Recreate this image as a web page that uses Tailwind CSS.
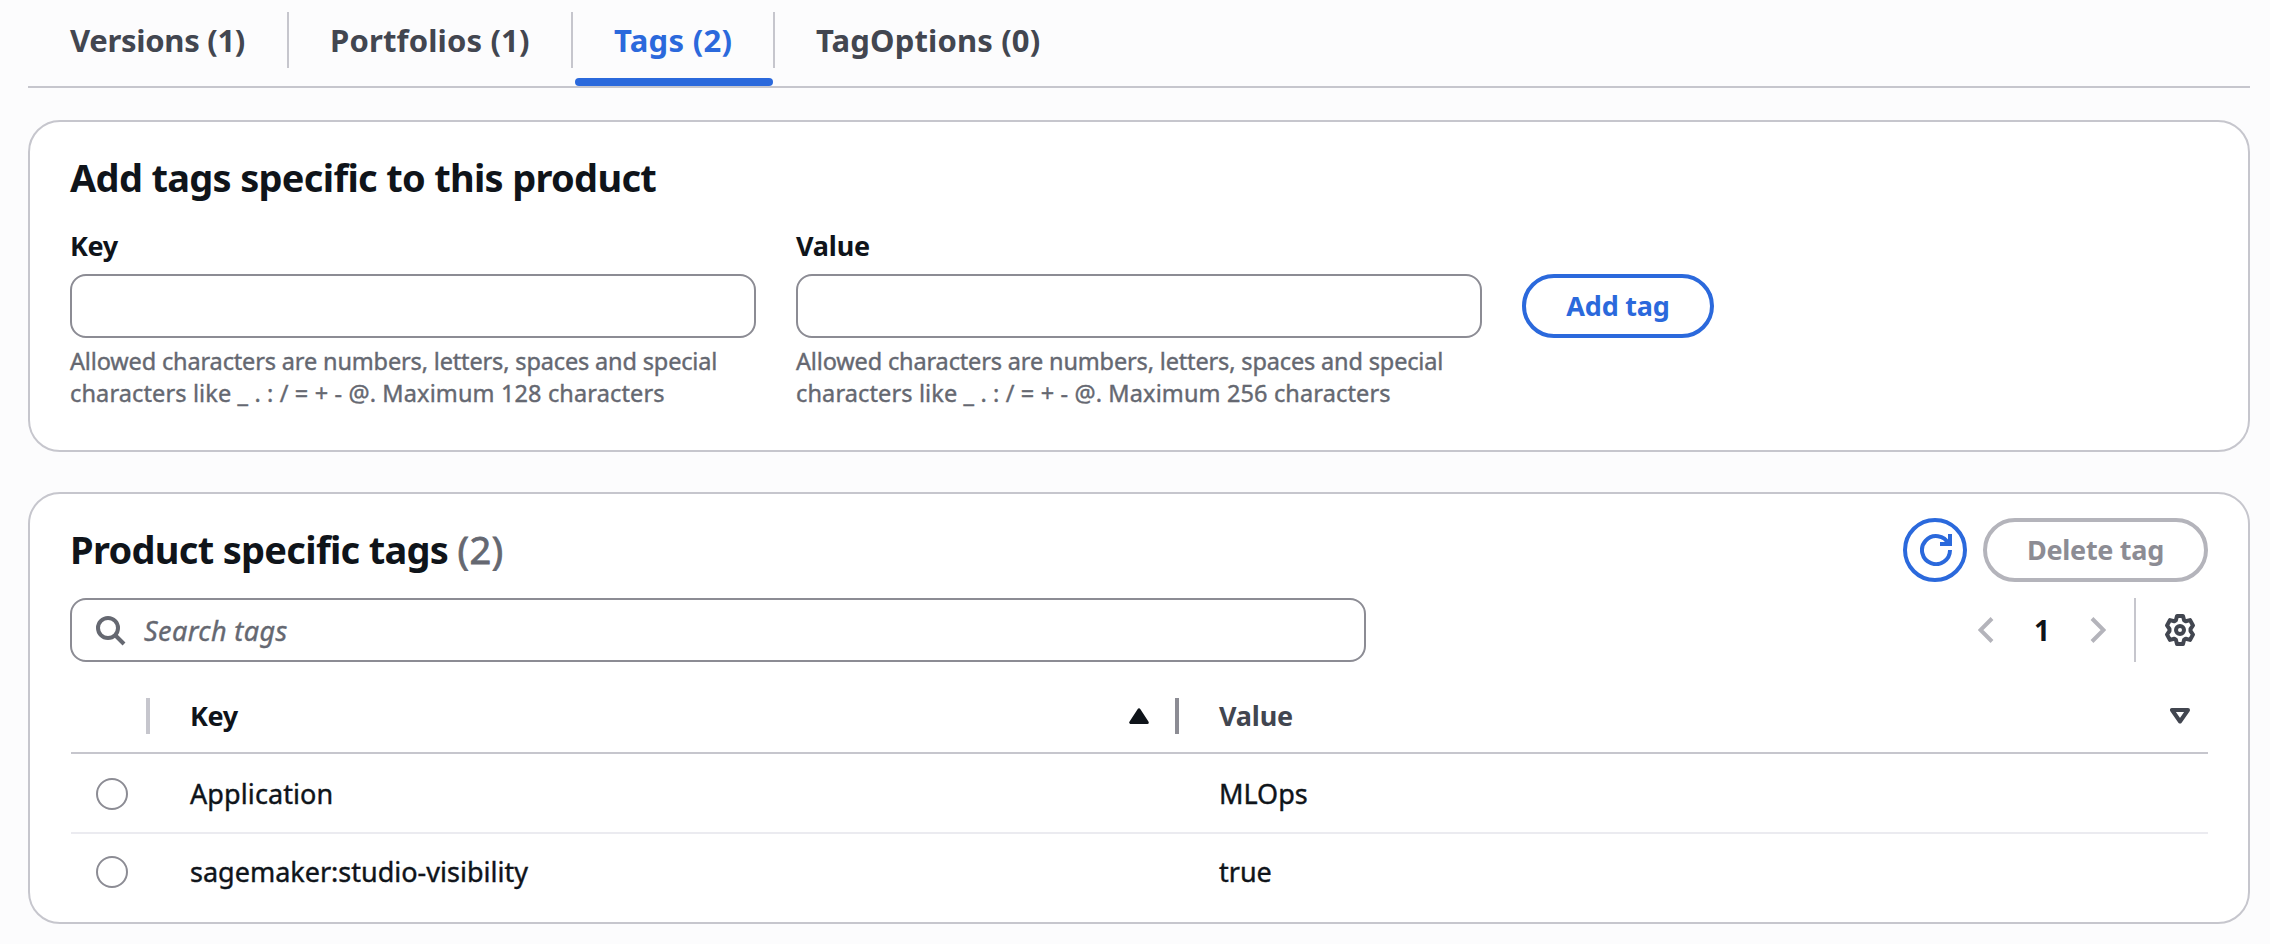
<!DOCTYPE html>
<html lang="en">
<head>
<meta charset="utf-8">
<title>Product tags</title>
<script src="https://cdn.jsdelivr.net/npm/@tailwindcss/browser@4"></script>
</head>
<body class="h-[944px] overflow-hidden bg-[#fcfcfd] pl-7 pr-5 font-['Noto_Sans',sans-serif] text-[27px] text-[#0f141a]">

  <!-- Tabs -->
  <nav class="flex h-22 border-b-2 border-[#c6c6cd] text-[31px] leading-20 font-bold text-[#424650] whitespace-nowrap">
    <div class="w-[259px] pl-[42px] tracking-[-0.3px]">Versions (1)</div>
    <div class="mt-3 h-14 w-0.5 bg-[#c6c6cd]"></div>
    <div class="w-[282px] pl-[41px] tracking-[0.15px]">Portfolios (1)</div>
    <div class="mt-3 h-14 w-0.5 bg-[#c6c6cd]"></div>
    <div class="ml-0.5 flex w-[198px] flex-col text-[#2b69dc]">
      <div class="h-[78px] pl-[39px] tracking-[0.3px]">Tags (2)</div>
      <div class="h-2 rounded-[4px] bg-[#2b69dc]"></div>
    </div>
    <div class="mt-3 h-14 w-0.5 bg-[#c6c6cd]"></div>
    <div class="pl-[41px] tracking-[0.15px]">TagOptions (0)</div>
  </nav>

  <!-- Add tag form -->
  <section class="mt-8 h-[332px] rounded-[32px] border-2 border-[#c6c6cd] bg-white px-10 pt-[31px]">
    <h2 class="text-[38px] leading-12 font-bold tracking-[-0.7px]">Add tags specific to this product</h2>
    <div class="mt-[25px] flex gap-10">
      <div class="w-[686px]">
        <div class="leading-10 font-bold tracking-[-0.4px]">Key</div>
        <div class="mt-2 h-16 rounded-[16px] border-2 border-[#8c8c94] bg-white"></div>
        <p class="mt-[7px] text-[23.5px] leading-8 text-[#656871] whitespace-nowrap [-webkit-text-stroke:0.4px]"><span class="tracking-[-0.15px]">Allowed characters are numbers, letters, spaces and special</span><br><span class="tracking-[0.13px]">characters like _ . : / = + - @. Maximum 128 characters</span></p>
      </div>
      <div class="w-[686px]">
        <div class="leading-10 font-bold tracking-[-0.2px]">Value</div>
        <div class="mt-2 h-16 rounded-[16px] border-2 border-[#8c8c94] bg-white"></div>
        <p class="mt-[7px] text-[23.5px] leading-8 text-[#656871] whitespace-nowrap [-webkit-text-stroke:0.4px]"><span class="tracking-[-0.15px]">Allowed characters are numbers, letters, spaces and special</span><br><span class="tracking-[0.13px]">characters like _ . : / = + - @. Maximum 256 characters</span></p>
      </div>
      <button class="mt-12 flex h-16 w-[192px] items-center justify-center rounded-full border-4 border-[#2b69dc] font-bold tracking-[-0.2px] text-[#2b69dc]">Add tag</button>
    </div>
  </section>

  <!-- Tag table -->
  <section class="mt-10 h-[432px] rounded-[32px] border-2 border-[#c6c6cd] bg-white px-10 pt-6">
    <div class="flex h-16 items-center">
      <h2 class="flex-1 pb-0.5 text-[38px] leading-12 font-bold tracking-[-0.7px]">Product specific tags <span class="font-normal tracking-[0.6px] text-[#656871] [-webkit-text-stroke:0.8px]">(2)</span></h2>
      <button class="mr-4 flex size-16 items-center justify-center rounded-full border-4 border-[#2b69dc]">
        <svg class="ml-px size-8" viewBox="0 0 16 16" fill="none" stroke="#2b69dc" stroke-width="2"><path d="M10 5h5V0"/><path d="M15 8a7 7 0 1 1-.7-3"/></svg>
      </button>
      <button class="flex h-16 w-[225px] items-center justify-center rounded-full border-4 border-[#b4b4bb] font-bold tracking-[-0.3px] text-[#8c8c94]">Delete tag</button>
    </div>

    <div class="mt-4 flex h-16 items-center">
      <div class="flex h-16 w-[1296px] items-center rounded-[16px] border-2 border-[#8c8c94] bg-white pl-6">
        <svg class="size-8" viewBox="0 0 32 32" fill="none" stroke="#656871" stroke-width="4"><circle cx="12" cy="14" r="10"/><path d="M19 21l9 9"/></svg>
        <span class="ml-4 pt-0.5 tracking-[0.4px] text-[#656871] italic [-webkit-text-stroke:0.4px]">Search tags</span>
      </div>
      <div class="ml-auto flex h-16 items-center">
        <svg class="h-8 w-4" viewBox="0 0 16 32" fill="none" stroke="#b4b4bb" stroke-width="4"><path d="M14 4.500L2.500 16l11.500 11.500"/></svg>
        <span class="w-[96px] text-center text-[28px] font-bold">1</span>
        <svg class="h-8 w-4" viewBox="0 0 16 32" fill="none" stroke="#b4b4bb" stroke-width="4"><path d="M2 4.500L13.500 16L2 27.500"/></svg>
        <div class="ml-7 h-16 w-0.5 bg-[#c6c6cd]"></div>
        <svg class="mr-3 ml-7 size-8" viewBox="0 0 32 32" fill="none" stroke="#424650" stroke-width="4" stroke-linejoin="round"><path d="M13 2h6l1.100 4.300 1.600 1 4.300-1.200 3 5.300L26.500 15v2l2.500 3.600-3 5.300-4.300-1.200-1.600 1L19 30h-6l-1.100-4.300-1.600-1L6 25.900l-3-5.300L5.500 17v-2L3 11.400l3-5.300 4.300 1.200 1.600-1z"/><circle cx="16" cy="16" r="4"/></svg>
      </div>
    </div>

    <div class="ml-px">
      <div class="flex h-[92px] items-center border-b-2 border-[#c6c6cd] pt-[18px] font-bold">
        <div class="ml-[75px] h-9 w-1 bg-[#c6c6cd]"></div>
        <div class="ml-10 flex-none tracking-[-0.4px]">Key</div>
        <div class="flex-1"></div>
        <div class="flex w-[1079px] flex-none items-center">
          <svg class="h-4 w-5" viewBox="0 0 20 16" fill="#0f141a" stroke="#0f141a" stroke-width="3" stroke-linejoin="round"><path d="M10 1.800L1.700 14.500h16.600z"/></svg>
          <div class="ml-[26px] h-9 w-1 bg-[#8c8c94]"></div>
          <div class="ml-10 tracking-[-0.2px] text-[#424650]">Value</div>
          <svg class="mr-[18px] ml-auto h-4 w-5" viewBox="0 0 20 16" fill="none" stroke="#424650" stroke-width="4" stroke-linejoin="round"><path d="M2 2h16l-8 11.500z"/></svg>
        </div>
      </div>
      <div class="flex h-20 items-center border-b-2 border-[#ebebf0] pt-0.5 [-webkit-text-stroke:0.4px]">
        <div class="ml-[25px] size-8 rounded-full border-2 border-[#8c8c94]"></div>
        <div class="ml-[62px] w-[1029px] tracking-[0.1px]">Application</div>
        <div>MLOps</div>
      </div>
      <div class="flex h-[76px] items-center [-webkit-text-stroke:0.4px]">
        <div class="ml-[25px] size-8 rounded-full border-2 border-[#8c8c94]"></div>
        <div class="ml-[62px] w-[1029px]">sagemaker:studio-visibility</div>
        <div>true</div>
      </div>
    </div>
  </section>
</body>
</html>
